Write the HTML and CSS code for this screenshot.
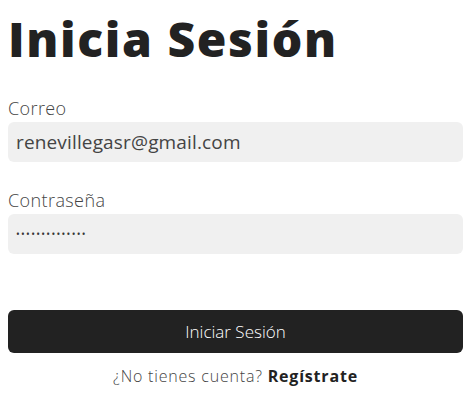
FILE: index.html
```html
<!DOCTYPE html>
<html lang="es">
<head>
<meta charset="utf-8">
<link rel="stylesheet" href="styles.css">
</head>
<body>
<main class="login">
  <h1 class="title">Inicia Sesión</h1>
  <form class="form">
    <label class="field">
      <span class="label">Correo</span>
      <input class="input" type="email" value="renevillegasr@gmail.com">
    </label>
    <label class="field field-pass">
      <span class="label">Contraseña</span>
      <input class="input input-pass" type="password" value="renevillegasr1">
    </label>
    <button class="btn" type="button">Iniciar Sesión</button>
    <p class="footer">¿No tienes cuenta? <a class="link" href="#">Regístrate</a></p>
  </form>
</main>
</body>
</html>
```

FILE: styles.css
```css
* { box-sizing: border-box; }
body {
  margin: 8px;
  font-family: "Open Sans", "Liberation Sans", sans-serif;
  color: #444;
  background: #fff;
}
.login { width: 455px; }
.title {
  margin: 0;
  font-size: 48px;
  line-height: 62px;
  font-weight: 800;
  letter-spacing: 1.6px;
  color: #222;
}
.form { display: flex; flex-direction: column; margin-top: 26px; }
.field { display: flex; flex-direction: column; gap: 2px; }
.field-pass { margin-top: 26px; }
.label {
  font-size: 18px;
  line-height: 24px;
  font-weight: 300;
  letter-spacing: 0.4px;
  color: #444;
}
.input {
  height: 40px;
  border: none;
  border-radius: 6px;
  background: #f0f0f0;
  padding: 0 8px;
  font-family: inherit;
  font-size: 19px;
  font-weight: 400;
  letter-spacing: 0.15px;
  color: #444;
  outline: none;
}
.input-pass {
  font-size: 10px;
  letter-spacing: 1.3px;
  color: #333;
}
.btn {
  margin-top: 56px;
  height: 43px;
  border: none;
  border-radius: 6px;
  background: #222;
  color: #fff;
  font-family: inherit;
  font-size: 17px;
  font-weight: 300;
}
.footer {
  margin: 13px 0 0;
  text-align: center;
  font-size: 16px;
  line-height: 20px;
  font-weight: 300;
  letter-spacing: 0.8px;
  color: #444;
}
.link { color: #222; font-weight: 700; text-decoration: none; }
```
